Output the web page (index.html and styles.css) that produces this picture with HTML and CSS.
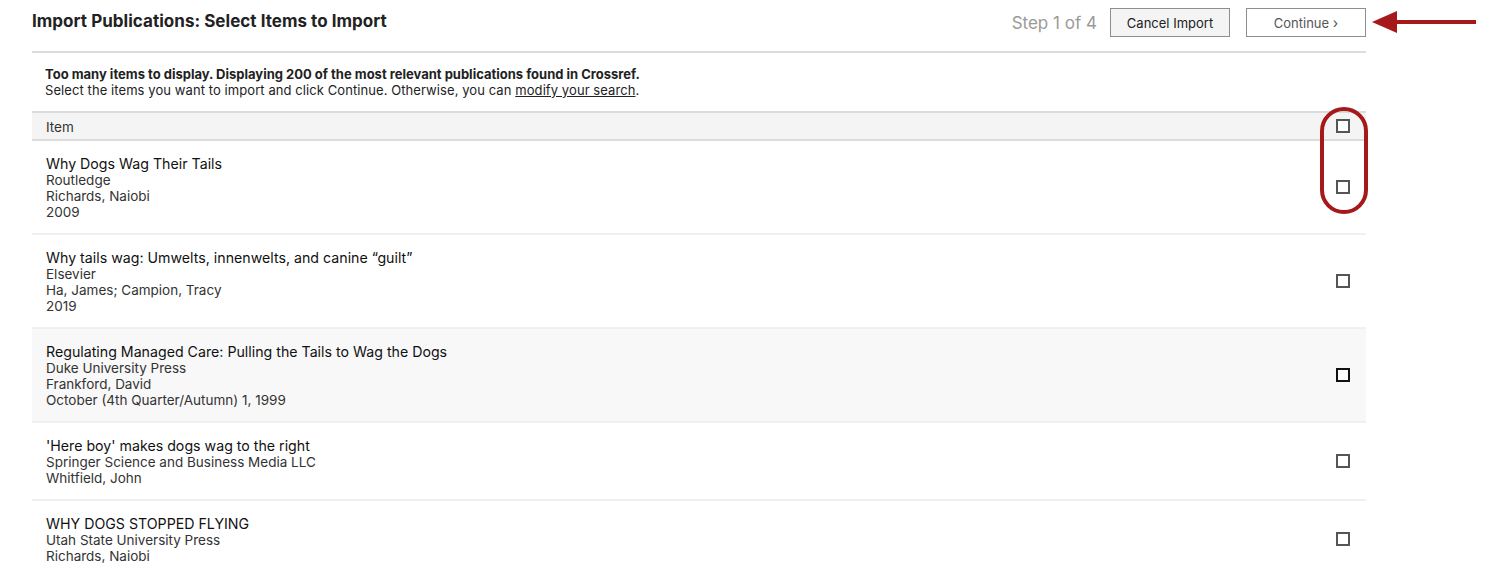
FILE: index.html
```html
<!DOCTYPE html>
<html lang="en">
<head>
<meta charset="utf-8">
<title>Import Publications</title>
<link rel="stylesheet" href="styles.css">
</head>
<body>
<div class="page">
  <header class="top">
    <h1 class="title">Import Publications: Select Items to Import</h1>
    <div class="actions">
      <span class="step">Step 1 of 4</span>
      <button class="btn btn-cancel">Cancel Import</button>
      <button class="btn btn-continue">Continue <span class="chev">&#8250;</span></button>
    </div>
  </header>
  <div class="notice">
    <p class="strong">Too many items to display. Displaying 200 of the most relevant publications found in Crossref.</p>
    <p>Select the items you want to import and click Continue. Otherwise, you can <a href="#">modify your search</a>.</p>
  </div>
  <div class="table">
    <div class="thead">
      <span>Item</span>
      <span class="cb"></span>
    </div>
    <div class="row">
      <div class="info">
        <div class="t">Why Dogs Wag Their Tails</div>
        <div class="m">Routledge</div>
        <div class="m">Richards, Naiobi</div>
        <div class="m">2009</div>
      </div>
      <span class="cb"></span>
    </div>
    <div class="row">
      <div class="info">
        <div class="t">Why tails wag: Umwelts, innenwelts, and canine “guilt”</div>
        <div class="m">Elsevier</div>
        <div class="m">Ha, James; Campion, Tracy</div>
        <div class="m">2019</div>
      </div>
      <span class="cb"></span>
    </div>
    <div class="row hover">
      <div class="info">
        <div class="t">Regulating Managed Care: Pulling the Tails to Wag the Dogs</div>
        <div class="m">Duke University Press</div>
        <div class="m">Frankford, David</div>
        <div class="m">October (4th Quarter/Autumn) 1, 1999</div>
      </div>
      <span class="cb"></span>
    </div>
    <div class="row">
      <div class="info">
        <div class="t">'Here boy' makes dogs wag to the right</div>
        <div class="m">Springer Science and Business Media LLC</div>
        <div class="m">Whitfield, John</div>
      </div>
      <span class="cb"></span>
    </div>
    <div class="row">
      <div class="info">
        <div class="t">WHY DOGS STOPPED FLYING</div>
        <div class="m">Utah State University Press</div>
        <div class="m">Richards, Naiobi</div>
      </div>
      <span class="cb"></span>
    </div>
  </div>
</div>
<div class="callout-ring"></div>
<svg class="callout-arrow" width="106" height="26" viewBox="0 0 106 26">
  <polygon points="0,13 25,2 25,24" fill="#a5191b"/>
  <rect x="22" y="11" width="82" height="4" fill="#a5191b"/>
</svg>
</body>
</html>
```

FILE: styles.css
```css
* { box-sizing: border-box; }
html, body { margin: 0; padding: 0; background: #fff; }
body {
  font-family: Inter, "Noto Sans", "Liberation Sans", sans-serif;
  color: #222;
  position: relative;
  height: 569px;
  overflow: hidden;
}
.page {
  margin-left: 32px;
  width: 1334px;
}
.top {
  display: flex;
  justify-content: space-between;
  align-items: flex-start;
  padding-top: 8px;
  height: 53px;
  border-bottom: 2px solid #dcdcdc;
}
.title {
  margin: 2px 0 0;
  font-size: 17px;
  font-weight: 700;
  line-height: 22px;
  letter-spacing: 0.03px;
  color: #222;
}
.actions {
  display: flex;
  align-items: center;
  height: 29px;
}
.step {
  font-size: 17px;
  color: #9a9a9a;
  margin-right: 13px;
}
.btn {
  font-family: inherit;
  font-size: 13px;
  height: 29px;
  width: 120px;
  border: 1px solid #8e8e8e;
  color: #222;
  padding: 0;
  border-radius: 0;
}
.btn-cancel { background: #f4f4f4; }
.btn-continue {
  background: #fff;
  color: #555;
  margin-left: 16px;
}
.chev { font-size: 14px; }
.notice {
  padding: 13px 0 0 13px;
  font-size: 13px;
  line-height: 16px;
  color: #222;
}
.notice p { margin: 0; }
.notice .strong { font-weight: 700; }
.notice p:not(.strong) { letter-spacing: 0.08px; }
.notice a { color: #222; text-decoration: underline; }
.table { margin-top: 13px; }
.thead {
  display: flex;
  justify-content: space-between;
  align-items: center;
  height: 30px;
  background: #f4f4f4;
  border-top: 2px solid #dcdcdc;
  border-bottom: 2px solid #dcdcdc;
  padding: 0 16px 0 14px;
  font-size: 13.5px;
  color: #333;
}
.thead span:first-child { padding-top: 2px; }
.row {
  display: flex;
  justify-content: space-between;
  align-items: center;
  padding: 14px 16px 13px 14px;
  border-bottom: 2px solid #f0f0f0;
}
.row .cb { margin-bottom: 2px; }
.row.hover { background: #f8f8f8; }
.t { font-size: 14.2px; line-height: 17px; color: #111; }
.m { font-size: 13.5px; line-height: 16px; color: #333; }
.cb {
  display: block;
  width: 14px;
  height: 14px;
  border: 2px solid #555;
  background: #fff;
}
.row.hover .cb { border-color: #111; }
.callout-ring {
  position: absolute;
  left: 1320px;
  top: 107px;
  width: 48px;
  height: 107px;
  border: 4px solid #a5191b;
  border-radius: 24px;
}
.callout-arrow {
  position: absolute;
  left: 1372px;
  top: 9px;
}
```
